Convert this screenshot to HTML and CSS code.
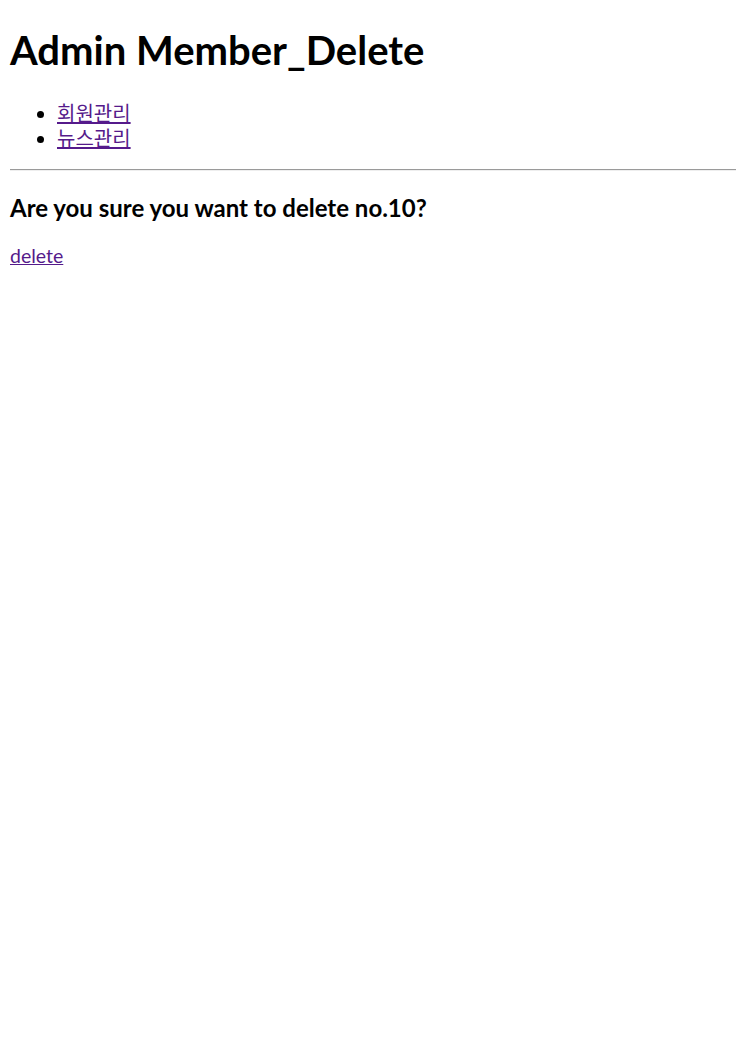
FILE: index.html
```html
<!DOCTYPE html>
<html lang="ko">
<head>
<meta charset="utf-8">
<title>Admin Member_Delete</title>
<link rel="stylesheet" href="styles.css">
</head>
<body>
<h1 class="title">Admin Member_Delete</h1>
<ul class="menu">
  <li><a href="#">회원관리</a></li>
  <li><a href="#">뉴스관리</a></li>
</ul>
<hr class="rule">
<h3 class="question">Are you sure you want to delete no.10?</h3>
<a class="link" href="#">delete</a>
</body>
</html>
```
FILE: styles.css
```css
html, body {
  background: #fff;
}
body {
  margin: 0;
  padding: 0 0 0 10px;
  font-family: Lato, "Noto Sans CJK KR", sans-serif;
  color: #000;
}
a {
  color: #551a8b;
}
.title {
  font-size: 40px;
  line-height: 53px;
  font-weight: 700;
  margin: 0;
  padding-top: 24px;
}
.menu {
  margin: 24px 0 0;
  padding-left: 47px;
  font-size: 20px;
  line-height: 25px;
}
.rule {
  margin: 18px 0 0;
  border: 0;
  border-top: 1px solid #9a9a9a;
  border-bottom: 1px solid #eeeeee;
  height: 0;
}
.question {
  font-size: 24px;
  line-height: 30px;
  font-weight: 700;
  margin: 22px 0 0;
}
.link {
  display: inline-block;
  margin-top: 20px;
  font-size: 19.5px;
  line-height: 25px;
}
```
